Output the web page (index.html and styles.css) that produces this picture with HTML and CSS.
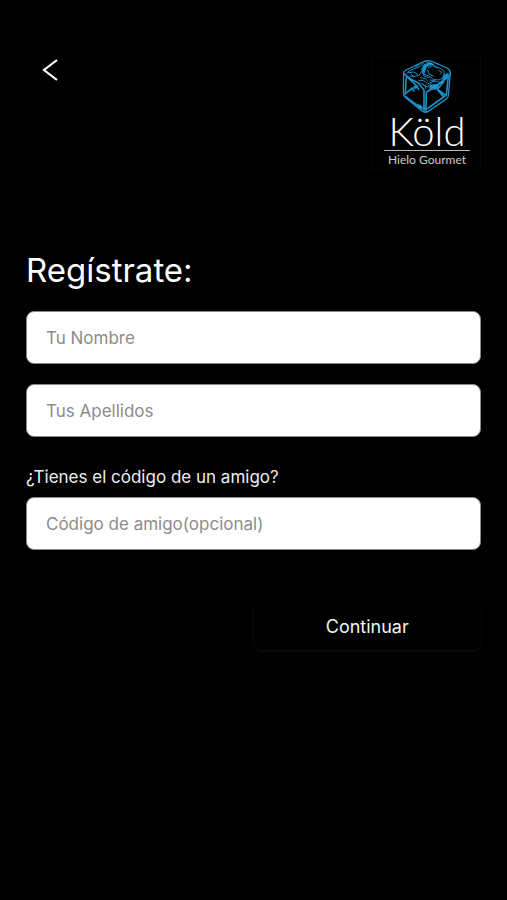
FILE: index.html
```html
<!DOCTYPE html>
<html lang="es">
<head>
<meta charset="utf-8">
<meta name="viewport" content="width=device-width, initial-scale=1">
<title>Regístrate</title>
<link rel="stylesheet" href="styles.css">
</head>
<body>
<main class="screen">
  <header class="top">
    <button class="back" type="button" aria-label="Volver">
      <svg width="16" height="22" viewBox="0 0 16 22" fill="none" stroke="#fff" stroke-width="2.200" aria-hidden="true"><path d="M15 1 2 11l13 10"/></svg>
    </button>
    <div class="logo">
      <svg class="cube" width="50" height="54" viewBox="111 27 150 162" fill="none" stroke="#1a8fc6" stroke-width="5" stroke-linejoin="round" stroke-linecap="round" aria-hidden="true">
        <path d="M116 70 Q116 64 123 60 L178 34 Q190 29 202 35 L246 54 Q257 60 256 70 L250 138 Q249 144 241 149 L190 184 Q180 190 171 183 L122 143 Q115 137 115 129Z" stroke-width="4"/>
        <path d="M118 72 135 86 160 99 177 120 177 183M183 184 184 126 210 112 254 74" stroke-width="5"/>
        <path d="M124 83 121 127M119 133 142 114 146 123M122 140 167 174M131 84 155 108 161 118M250 78 244 135 190 174M236 96 217 118 235 139M216 117 242 136"/>
        <path d="M146 109l11-5 3 8-12 6zM154 162l15 4 4 15-19-15zM193 106l20-4 10 8-13 9-16-3zM235 76l15-8-4 18-16 12zM178 43l16-6 10 6-19 8-8 20-8-12z" fill="#1a8fc6" stroke-width="1"/>
        <path d="M128 66 145 57 165 50 174 40M126 69 146 66 158 73M136 79 161 77 170 64 178 79 192 83M174 46 180 59 176 73 190 77 205 88 222 90 235 82M198 39 211 49 227 56 238 65 236 78M190 54 202 47 216 54M188 60 193 73 205 78M162 91 176 91 188 102 204 94 226 97 241 84M173 104 188 111 199 101" stroke-width="3"/>
        <path d="M181 34 205 44M151 51 165 43M166 83 182 86 188 94M193 90 211 92M166 99 181 107 182 116M204 113 220 103 233 97M127 83 139 91M160 170 175 174 188 178M221 62 230 66 226 72M138 72 147 82" stroke="#49b7e6" stroke-width="2"/>
      </svg>
      <span class="brand">Köld</span>
      <span class="tagline">Hielo Gourmet</span>
    </div>
  </header>
  <form class="form">
    <h1>Regístrate:</h1>
    <input class="field" type="text" placeholder="Tu Nombre" aria-label="Tu Nombre">
    <input class="field" type="text" placeholder="Tus Apellidos" aria-label="Tus Apellidos">
    <label for="codigo">¿Tienes el código de un amigo?</label>
    <input class="field" id="codigo" type="text" placeholder="Código de amigo(opcional)">
    <button class="submit" type="button">Continuar</button>
  </form>
</main>
</body>
</html>
```
FILE: styles.css
```css
* { box-sizing: border-box; }
body {
  margin: 0;
  background: #000;
  color: #fff;
  font-family: Inter, "Liberation Sans", sans-serif;
  font-size: 17px;
}
.screen { min-height: 100vh; padding: 57px 26px 24px; }
.top {
  display: flex;
  justify-content: space-between;
  align-items: flex-start;
}
.back {
  display: flex;
  padding: 2px 16px;
  border: 0;
  background: none;
}
.logo {
  display: flex;
  flex-direction: column;
  align-items: center;
  width: 110px;
  height: 113px;
  padding: 1px 0 0 2px;
  border: 1px solid #080808;
  font-family: Lato, sans-serif;
}
.brand {
  width: 86px;
  height: 39px;
  border-bottom: 1px solid #bbb;
  font-size: 40px;
  font-weight: 300;
  line-height: 36px;
  text-align: center;
}
.tagline {
  color: #ccc;
  font-size: 12px;
  line-height: 18px;
}
.cube { flex: none; }
.form {
  display: flex;
  flex-direction: column;
  padding-top: 79px;
}
h1 {
  margin: 0 0 20px;
  font-size: 33px;
  font-weight: 400;
  line-height: 42px;
}
.field {
  width: 100%;
  height: 53px;
  margin: 0 0 20px;
  padding: 0 19px;
  border: 1px solid #888;
  border-radius: 8px;
  background: #fff;
  color: #000;
  font: inherit;
}
.field::placeholder { color: #8c8c8c; opacity: 1; }
label {
  margin: 9px 0;
  color: #eee;
  line-height: 22px;
}
.submit {
  align-self: flex-end;
  width: 50%;
  height: 48px;
  margin-top: 32px;
  border: 0;
  border-radius: 8px;
  background: #000;
  box-shadow: 0 1px 3px #141414;
  color: #f4f4f4;
  font: inherit;
  font-size: 18px;
}
```
